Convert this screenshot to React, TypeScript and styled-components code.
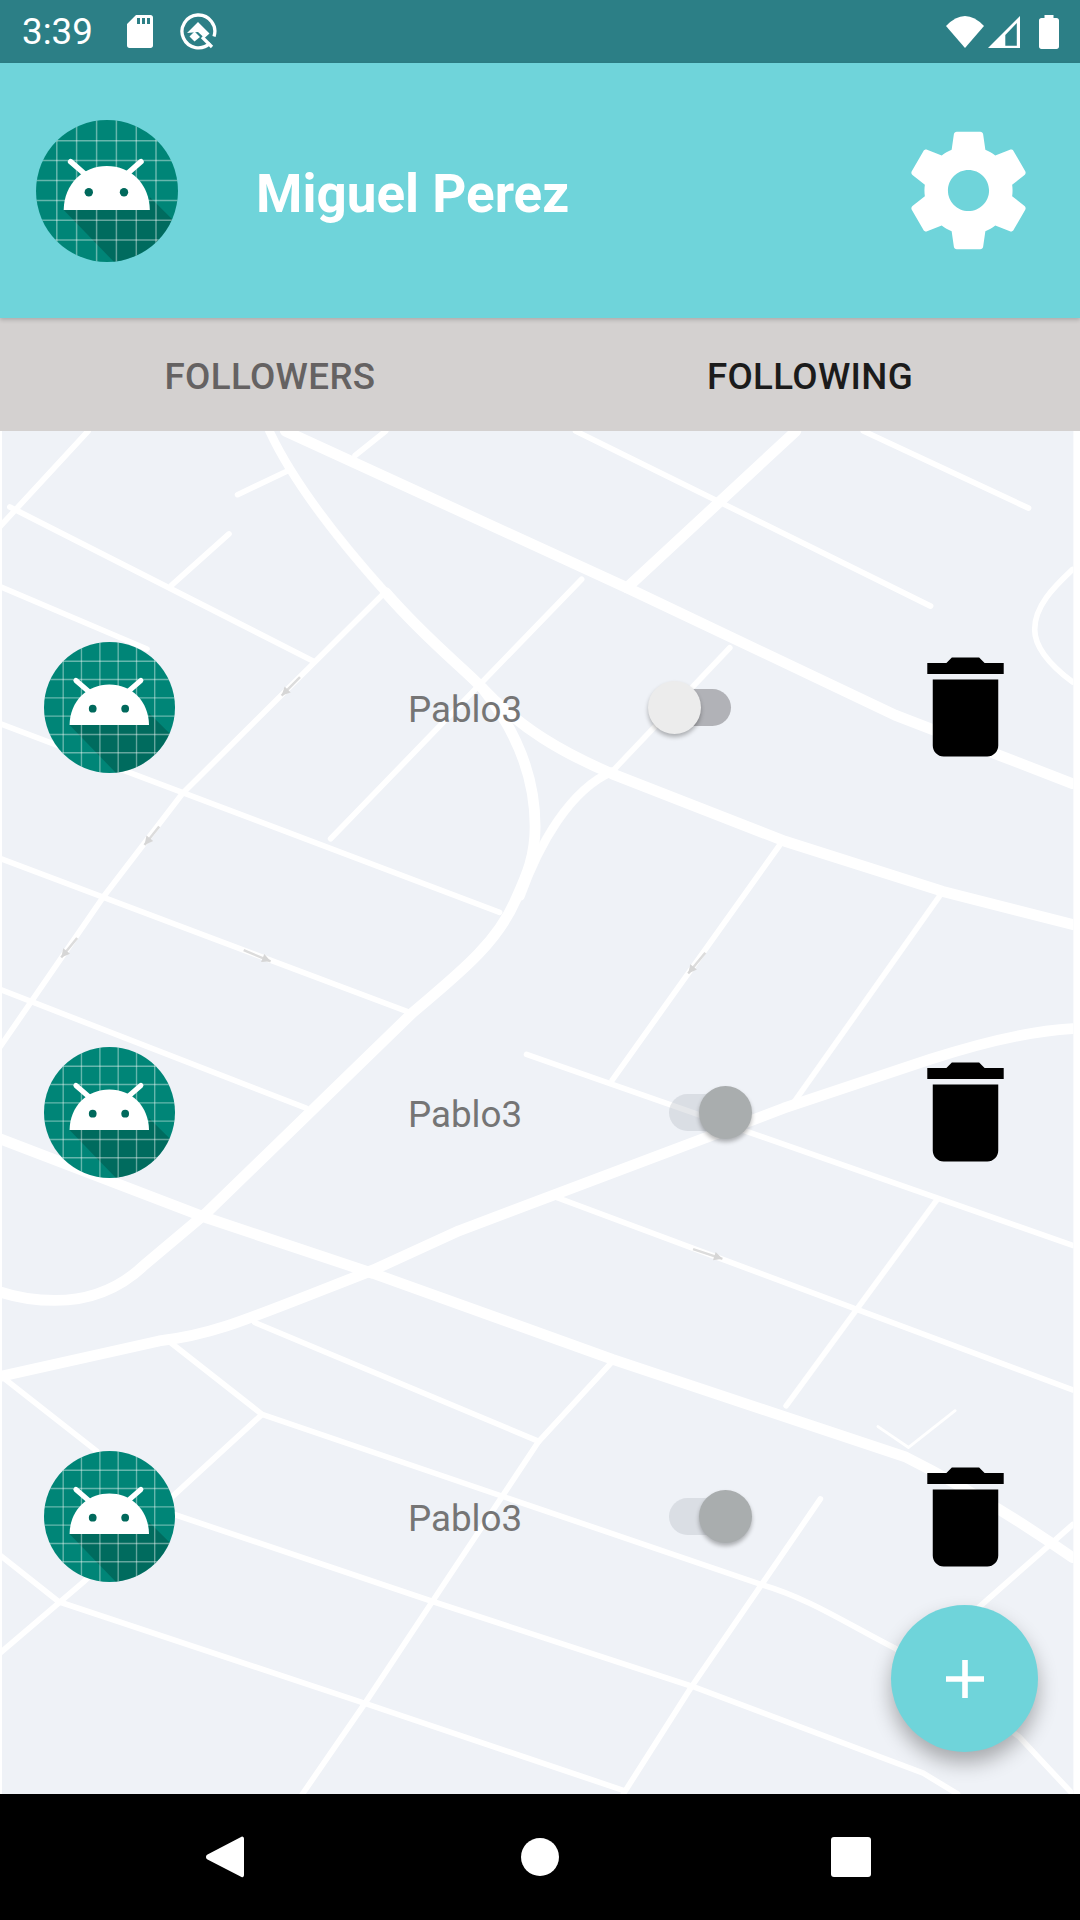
import React from 'react'
import styled, { createGlobalStyle } from 'styled-components'

const GlobalStyle = createGlobalStyle`
  html, body {
    margin: 0;
    padding: 0;
    background: #ffffff;
    font-family: Roboto, "Liberation Sans", sans-serif;
  }
`

const Screen = styled.div`
  width: 1080px;
  height: 1920px;
  display: flex;
  flex-direction: column;
  overflow: hidden;
`

const StatusBar = styled.div`
  height: 63px;
  flex: none;
  display: flex;
  align-items: center;
  padding: 0 21px 0 22px;
  background: #2c7f86;
  color: #ffffff;
  font-size: 36.75px;
`

const Clock = styled.span`
  width: 78px;
`

const StatusLeft = styled.div`
  display: flex;
  align-items: center;
  gap: 27px;
  flex: 1;
`

const StatusRight = styled.div`
  display: flex;
  align-items: center;
`

const Header = styled.header`
  position: relative;
  z-index: 2;
  height: 255px;
  flex: none;
  display: flex;
  align-items: center;
  padding-left: 36px;
  background: #6fd4da;
  box-shadow: 0 2px 4px rgba(0, 0, 0, 0.18);
`

const Title = styled.h1`
  flex: 1;
  margin: 6px 0 0 78px;
  color: #ffffff;
  font-size: 53px;
  font-weight: 700;
`

const Gear = styled.svg`
  width: 141px;
  height: 141px;
  margin-right: 41px;
  fill: #ffffff;
`

const Tabs = styled.nav`
  height: 113px;
  flex: none;
  display: grid;
  grid-template-columns: 1fr 1fr;
  background: #d4d1d0;
`

const Tab = styled.div<{ $active?: boolean }>`
  display: flex;
  align-items: center;
  justify-content: center;
  padding-top: 4px;
  font-size: 36.75px;
  font-weight: 500;
  letter-spacing: 0.33px;
  color: ${(p) => (p.$active ? '#1b1b1b' : '#656262')};
`

const MapArea = styled.main`
  position: relative;
  flex: 1;
  padding-top: 74px;
`

const MapBackground = styled.svg`
  position: absolute;
  top: 0;
  left: 0;
  width: 1080px;
  height: 1363px;
`

const Row = styled.div`
  position: relative;
  height: 404.75px;
  display: flex;
  align-items: center;
  padding-left: 44px;
`

const AvatarIcon = styled.svg<{ $size: number }>`
  flex: none;
  width: ${(p) => p.$size}px;
  height: ${(p) => p.$size}px;
`

const Name = styled.span`
  width: 114px;
  margin: 4px 0 0 233px;
  color: #757575;
  font-size: 36.75px;
  white-space: nowrap;
`

const SwitchCell = styled.div<{ $on?: boolean }>`
  width: 104px;
  margin-left: 126px;
  display: flex;
  justify-content: ${(p) => (p.$on ? 'flex-end' : 'flex-start')};
`

const SwitchBox = styled.div`
  position: relative;
  width: 83px;
  height: 53px;
`

const Track = styled.div<{ $on?: boolean }>`
  position: absolute;
  top: 8px;
  left: ${(p) => (p.$on ? '0' : '8px')};
  width: 75px;
  height: 37px;
  border-radius: 18.5px;
  background: ${(p) => (p.$on ? 'rgba(170, 176, 186, 0.3)' : '#b1b2b7')};
`

const Thumb = styled.div<{ $on?: boolean }>`
  position: absolute;
  top: 0;
  left: ${(p) => (p.$on ? '30px' : '0')};
  width: 53px;
  height: 53px;
  border-radius: 50%;
  background: ${(p) => (p.$on ? '#a9adae' : '#ececec')};
  box-shadow: 0 3px 4px rgba(0, 0, 0, 0.28);
`

const TrashIcon = styled.svg`
  flex: none;
  width: 131px;
  height: 132px;
  margin-left: 148px;
  fill: #000000;
`

const Fab = styled.button`
  position: absolute;
  left: 891px;
  top: 1174px;
  width: 147px;
  height: 147px;
  padding: 0;
  border: 0;
  border-radius: 50%;
  display: flex;
  align-items: center;
  justify-content: center;
  background: #6fd4da;
  box-shadow: 0 11px 20px rgba(0, 0, 0, 0.3);
`

const PlusIcon = styled.svg`
  width: 38px;
  height: 38px;
  fill: #ffffff;
`

const NavBar = styled.footer`
  position: relative;
  z-index: 2;
  height: 126px;
  flex: none;
  background: #000000;
  display: flex;
  align-items: center;
  padding-left: 206px;
`

const BackIcon = styled.svg`
  width: 38px;
  height: 42px;
  fill: #ffffff;
`

const HomeDot = styled.div`
  width: 38px;
  height: 38px;
  margin-left: 277px;
  border-radius: 50%;
  background: #ffffff;
`

const RecentSquare = styled.div`
  width: 40px;
  height: 40px;
  margin-left: 272px;
  border-radius: 3px;
  background: #ffffff;
`

const majorRoads = [
  'M315 484 C350 524 378 545 394 562 C418 592 437 630 437 675 C437 700 430 715 421 735 C405 772 372 797 337 827 L169 990 L118 1033 C98 1052 75 1062 45 1062 C28 1062 12 1059 0 1055',
  'M233 352 L512 480 L731 584 L876 640',
  'M394 562 C425 595 460 615 500 632 L641 687 L770 728 L876 755',
  'M650 352 L512 480',
  'M0 930 L170 995 L305 1040 L500 1110 L740 1190 C790 1215 830 1240 876 1272',
  'M0 1124 L130 1095 C175 1090 200 1078 305 1037 L375 1005 L640 905 L760 865 C800 852 840 842 876 840',
]

const mediumRoads = ['M220 352 C240 395 280 445 315 484', 'M425 732 C440 690 465 645 500 630']

const minorRoads = [
  'M0 430 L72 352',
  'M8 414 L256 540',
  'M0 479 L120 530',
  'M140 478 L187 436',
  'M194 404 L236 384',
  'M290 372 L315 352',
  'M470 352 L760 495',
  'M705 352 L840 415',
  'M0 591 L408 745',
  'M315 483 L149 648 L84 733 L0 855',
  'M475 473 L270 685',
  'M596 529 L500 630',
  'M0 701 L335 827',
  'M639 687 L500 882',
  'M770 728 L645 905',
  'M0 808 L250 905',
  'M430 861 L876 1017',
  'M455 978 L876 1135',
  'M765 980 L642 1148',
  'M140 1097 L214 1155 L141 1222 L68 1292 L0 1350',
  'M208 1080 L440 1177 L500 1112',
  'M440 1177 L355 1305 L298 1391 L247 1465',
  'M143 1237 L354 1308 L565 1377 L754 1448 L782 1465',
  'M214 1155 L622 1294 C660 1305 690 1325 731 1346 L832 1418 L876 1465',
  'M0 1270 L48 1308 L298 1391 L509 1462',
  'M670 1224 L565 1377 L509 1465',
  'M0 1123 L79 1185',
  'M876 1245 L800 1312',
  'M876 465 C860 480 845 495 845 514 C845 530 860 545 876 557',
]

const arrows = [
  { x1: 245, y1: 553, x2: 230, y2: 568 },
  { x1: 130, y1: 675, x2: 118, y2: 690 },
  { x1: 63, y1: 766, x2: 50, y2: 782 },
  { x1: 199, y1: 776, x2: 221, y2: 785 },
  { x1: 576, y1: 778, x2: 562, y2: 795 },
  { x1: 566, y1: 1020, x2: 590, y2: 1028 },
]

const ArrowMark: React.FC<{ x1: number; y1: number; x2: number; y2: number }> = ({ x1, y1, x2, y2 }) => {
  const angle = (Math.atan2(y2 - y1, x2 - x1) * 180) / Math.PI
  return (
    <g>
      <line x1={x1} y1={y1} x2={x2} y2={y2} stroke="#dcdcdc" strokeWidth={2} />
      <polygon points="-7,-3.5 0,0 -7,3.5" fill="#d6d6d6" transform={`translate(${x2} ${y2}) rotate(${angle})`} />
    </g>
  )
}

const StreetMap: React.FC = () => (
  <MapBackground viewBox="0 352 882 1113" preserveAspectRatio="none">
    <defs>
      <clipPath id="map-clip">
        <rect x="1.6" y="352" width="875" height="1113" />
      </clipPath>
    </defs>
    <g clipPath="url(#map-clip)">
      <rect x="0" y="352" width="882" height="1113" fill="#eff2f7" />
      <g fill="none" stroke="#ffffff" strokeLinecap="round" strokeLinejoin="round">
        {minorRoads.map((d) => (
          <path key={d} d={d} strokeWidth={4.6} />
        ))}
        {mediumRoads.map((d) => (
          <path key={d} d={d} strokeWidth={7} />
        ))}
        {majorRoads.map((d) => (
          <path key={d} d={d} strokeWidth={8.8} />
        ))}
        <path d="M717 1165 L742 1182 L780 1152" strokeWidth={2.4} />
      </g>
      {arrows.map((a) => (
        <ArrowMark key={`${a.x1}-${a.y1}`} {...a} />
      ))}
    </g>
  </MapBackground>
)

const gridLines = [20.8, 40.6, 60.6, 80.4, 100.3, 120]

const Avatar: React.FC<{ size: number; id: string }> = ({ size, id }) => (
  <AvatarIcon $size={size} viewBox="0 0 142 142">
    <defs>
      <clipPath id={id}>
        <circle cx="71" cy="71" r="71" />
      </clipPath>
    </defs>
    <g clipPath={`url(#${id})`}>
      <rect width="142" height="142" fill="#008577" />
      <path d="M27.7 90 L80 144 H142 V105 L113.8 77 V90 Z" fill="#00352c" opacity="0.32" />
      {gridLines.map((v) => (
        <line key={`v${v}`} x1={v} y1="0" x2={v} y2="142" stroke="#ffffff" strokeWidth="1.5" opacity="0.4" />
      ))}
      {gridLines.map((v) => (
        <line key={`h${v}`} x1="0" y1={v} x2="142" y2={v} stroke="#ffffff" strokeWidth="1.5" opacity="0.4" />
      ))}
    </g>
    <path d="M34.6 41.7 L50 55 M105 41.7 L89.7 55" stroke="#ffffff" strokeWidth="5.5" strokeLinecap="round" />
    <path d="M27.7 90 C28 64 47 46 70.8 46 C95 46 113.5 64 113.8 90 Z" fill="#ffffff" />
    <circle cx="52.8" cy="72.3" r="4.2" fill="#00695c" />
    <circle cx="88" cy="72.3" r="4.2" fill="#00695c" />
  </AvatarIcon>
)

const SdCard = () => (
  <svg width="26" height="33" viewBox="0 0 26 33">
    <path
      fillRule="evenodd"
      fill="#ffffff"
      d="M9 0 H23.5 C25 0 26 1 26 2.5 V30.5 C26 32 25 33 23.5 33 H2.5 C1 33 0 32 0 30.5 V9 Z M10 3 V9 H13 V3 Z M15 3 V9 H18 V3 Z M20 3 V9 H23 V3 Z"
    />
  </svg>
)

const QBadge = () => (
  <svg width="37" height="37" viewBox="0 0 37 37">
    <path d="M30 30 A16.4 16.4 0 1 1 34 23.5" fill="none" stroke="#ffffff" strokeWidth="3.3" />
    <path d="M7 20 L18 9 L29.5 20.5 L24.5 25 L18 19 Z" fill="#ffffff" />
    <path d="M14.5 18.5 L20 24 L14.5 28.5 L9.5 23.5 Z" fill="#ffffff" />
    <path d="M22 24 L32 34" stroke="#ffffff" strokeWidth="3.2" />
  </svg>
)

const WifiIcon = () => (
  <svg width="38" height="32" viewBox="0 0 38 32">
    <path d="M0 10 Q19 -10 38 10 L19 32 Z" fill="#ffffff" />
  </svg>
)

const SignalIcon = () => (
  <svg width="32" height="32" viewBox="0 0 32 32" style={{ marginLeft: 4.5 }}>
    <path fillRule="evenodd" fill="#ffffff" d="M32 0 V32 H0 Z M17.3 29.8 V19 L28.8 7 V29.8 Z" />
  </svg>
)

const BatteryIcon = () => (
  <svg width="20" height="34" viewBox="0 0 20 34" style={{ marginLeft: 19 }}>
    <path
      d="M5.5 0 H14.5 V3 H17.5 C19 3 20 4 20 5.5 V31.5 C20 33 19 34 17.5 34 H2.5 C1 34 0 33 0 31.5 V5.5 C0 4 1 3 2.5 3 H5.5 Z"
      fill="#ffffff"
    />
  </svg>
)

const users = [
  { id: 'row-a', on: false },
  { id: 'row-b', on: true },
  { id: 'row-c', on: true },
]

const App: React.FC = () => (
  <Screen>
    <GlobalStyle />
    <StatusBar>
      <StatusLeft>
        <Clock>3:39</Clock>
        <SdCard />
        <QBadge />
      </StatusLeft>
      <StatusRight>
        <WifiIcon />
        <SignalIcon />
        <BatteryIcon />
      </StatusRight>
    </StatusBar>
    <Header>
      <Avatar size={142} id="head-avatar" />
      <Title>Miguel Perez</Title>
      <Gear viewBox="0 0 24 24">
        <path d="M19.43 12.98c.04-.32.07-.64.07-.98s-.03-.66-.07-.98l2.11-1.65c.19-.15.24-.42.12-.64l-2-3.46c-.12-.22-.39-.3-.61-.22l-2.49 1c-.52-.4-1.08-.73-1.69-.98l-.38-2.65C14.46 2.18 14.25 2 14 2h-4c-.25 0-.46.18-.49.42l-.38 2.65c-.61.25-1.17.59-1.69.98l-2.49-1c-.23-.09-.49 0-.61.22l-2 3.46c-.13.22-.07.49.12.64l2.11 1.65c-.04.32-.07.65-.07.98s.03.66.07.98l-2.11 1.65c-.19.15-.24.42-.12.64l2 3.46c.12.22.39.3.61.22l2.49-1c.52.4 1.08.73 1.69.98l.38 2.65c.03.24.24.42.49.42h4c.25 0 .46-.18.49-.42l.38-2.65c.61-.25 1.17-.59 1.69-.98l2.49 1c.23.09.49 0 .61-.22l2-3.46c.12-.22.07-.49-.12-.64l-2.11-1.65zM12 15.5c-1.93 0-3.5-1.57-3.5-3.5s1.57-3.5 3.5-3.5 3.5 1.57 3.5 3.5-1.57 3.5-3.5 3.5z" />
      </Gear>
    </Header>
    <Tabs>
      <Tab>FOLLOWERS</Tab>
      <Tab $active>FOLLOWING</Tab>
    </Tabs>
    <MapArea>
      <StreetMap />
      {users.map((u) => (
        <Row key={u.id}>
          <Avatar size={131} id={u.id} />
          <Name>Pablo3</Name>
          <SwitchCell $on={u.on}>
            <SwitchBox>
              <Track $on={u.on} />
              <Thumb $on={u.on} />
            </SwitchBox>
          </SwitchCell>
          <TrashIcon viewBox="0 0 24 24" preserveAspectRatio="none">
            <path d="M6 19c0 1.1.9 2 2 2h8c1.1 0 2-.9 2-2V7H6v12zM19 4h-3.5l-1-1h-5l-1 1H5v2h14V4z" />
          </TrashIcon>
        </Row>
      ))}
      <Fab>
        <PlusIcon viewBox="0 0 38 38">
          <path d="M16.2 0 H21.8 V16.2 H38 V21.8 H21.8 V38 H16.2 V21.8 H0 V16.2 H16.2 Z" />
        </PlusIcon>
      </Fab>
    </MapArea>
    <NavBar>
      <BackIcon viewBox="0 0 38 42">
        <path d="M36 0.5 C37.5 0.5 38 1.5 38 3 V39 C38 40.5 37 42 35.5 41 L1.5 23.5 C-0.5 22.5 -0.5 19.5 1.5 18.5 Z" />
      </BackIcon>
      <HomeDot />
      <RecentSquare />
    </NavBar>
  </Screen>
)

export default App
